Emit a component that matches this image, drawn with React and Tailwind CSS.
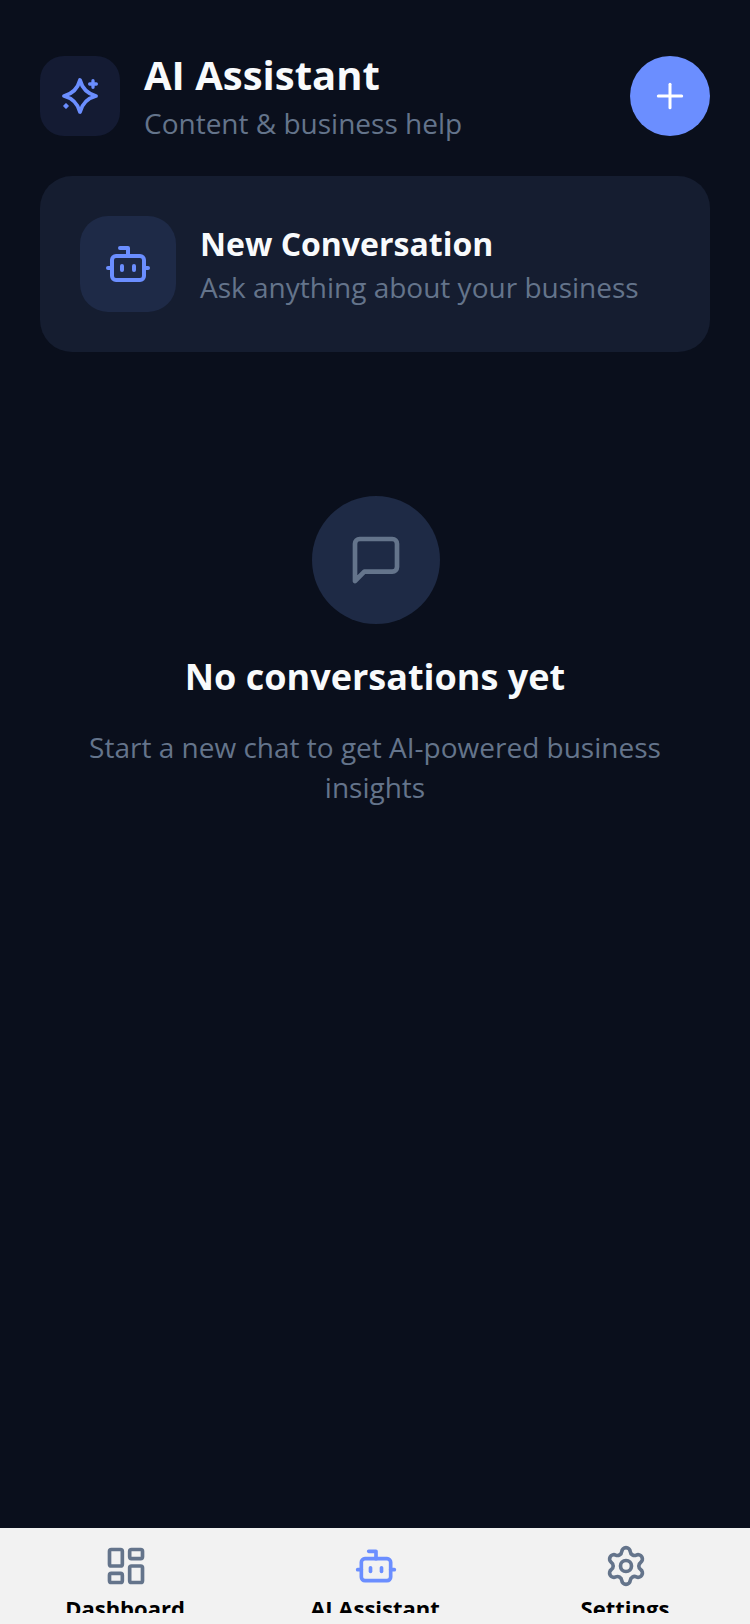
import React from 'react';
import { Plus, Bot, LayoutDashboard, Settings } from 'lucide-react';

// star with small plus and diamond, lucide's Sparkles has a different shape
const SparkIcon = ({ className }) => (
  <svg width="40" height="40" viewBox="0 0 24 24" fill="none" stroke="currentColor" strokeWidth="2.3" strokeLinecap="round" strokeLinejoin="round" className={className}>
    <path d="M12 2.4 Q14 10 21.6 12 Q14 14 12 21.6 Q10 14 2.4 12 Q10 10 12 2.4Z" />
    <path d="M19.8 2.8v4M17.8 4.8h4" strokeWidth="2" />
    <path d="M3.6 16.8l1.2 1.2-1.2 1.2-1.2-1.2z" fill="currentColor" strokeWidth="1" />
  </svg>
);

const ChatIcon = ({ className }) => (
  <svg width="56" height="56" viewBox="0 0 24 24" fill="none" stroke="currentColor" strokeWidth="2" strokeLinecap="round" strokeLinejoin="round" className={className}>
    <path d="M21 15a2 2 0 0 1-2 2H7l-4 4V5a2 2 0 0 1 2-2h14a2 2 0 0 1 2 2z" />
  </svg>
);

const NavItem = ({ icon: Icon, label, active }) => (
  <div className="flex flex-1 flex-col items-center">
    <Icon size={44} strokeWidth={2} className={`ml-[2px] ${active ? 'text-[#6b8eff]' : 'text-[#64748b]'}`} />
    <div className="mt-[5px] h-[20px] overflow-hidden text-[22px] leading-[30px] font-bold text-black">
      {label}
    </div>
  </div>
);

const App = () => {
  return (
    <div className="flex h-[1624px] flex-col overflow-hidden bg-[#0a0f1c] font-['Open_Sans',sans-serif]">
      <div className="flex-1 px-10 pt-14">
        {/* Header */}
        <div className="flex h-20 items-center justify-between">
          <div className="flex h-20 items-center gap-6">
            <div className="flex h-20 w-20 items-center justify-center rounded-3xl bg-[#141b33]">
              <SparkIcon className="text-[#6b8eff]" />
            </div>
            <div>
              <h1 className="-mt-[1px] text-[40px] leading-[54px] font-bold text-[#f8fafc]">AI Assistant</h1>
              <p className="mt-[1px] text-[28px] leading-[40px] text-[#64748b]">Content &amp; business help</p>
            </div>
          </div>
          <button className="flex h-20 w-20 items-center justify-center rounded-full bg-[#6b8eff]">
            <Plus size={40} strokeWidth={1.8} className="text-white" />
          </button>
        </div>

        {/* New conversation card */}
        <div className="mt-10 flex items-center gap-6 rounded-[32px] bg-[#151d30] p-10">
          <div className="flex h-24 w-24 items-center justify-center rounded-[28px] bg-[#1e2a47]">
            <Bot size={48} className="text-[#6b8eff]" />
          </div>
          <div>
            <div className="text-[32px] leading-[44px] font-bold text-[#f8fafc]">New Conversation</div>
            <div className="mt-[1px] text-[28px] leading-[40px] text-[#64748b]">Ask anything about your business</div>
          </div>
        </div>

        {/* Empty state */}
        <div className="mt-36 flex flex-col items-center px-10 text-center">
          <div className="ml-[2px] flex h-32 w-32 items-center justify-center rounded-full bg-[#1e2a45]">
            <ChatIcon className="text-[#64748b]" />
          </div>
          <h2 className="mt-[31px] text-[36px] leading-[44px] font-bold text-[#f8fafc]">No conversations yet</h2>
          <p className="mt-7 text-[28px] leading-[40px] text-[#64748b]">
            Start a new chat to get AI-powered business insights
          </p>
        </div>
      </div>

      {/* Bottom nav */}
      <div className="flex h-[96px] bg-[#f2f2f2] pt-4">
        <NavItem icon={LayoutDashboard} label="Dashboard" />
        <NavItem icon={Bot} label="AI Assistant" active />
        <NavItem icon={Settings} label="Settings" />
      </div>
    </div>
  );
};

export default App;
